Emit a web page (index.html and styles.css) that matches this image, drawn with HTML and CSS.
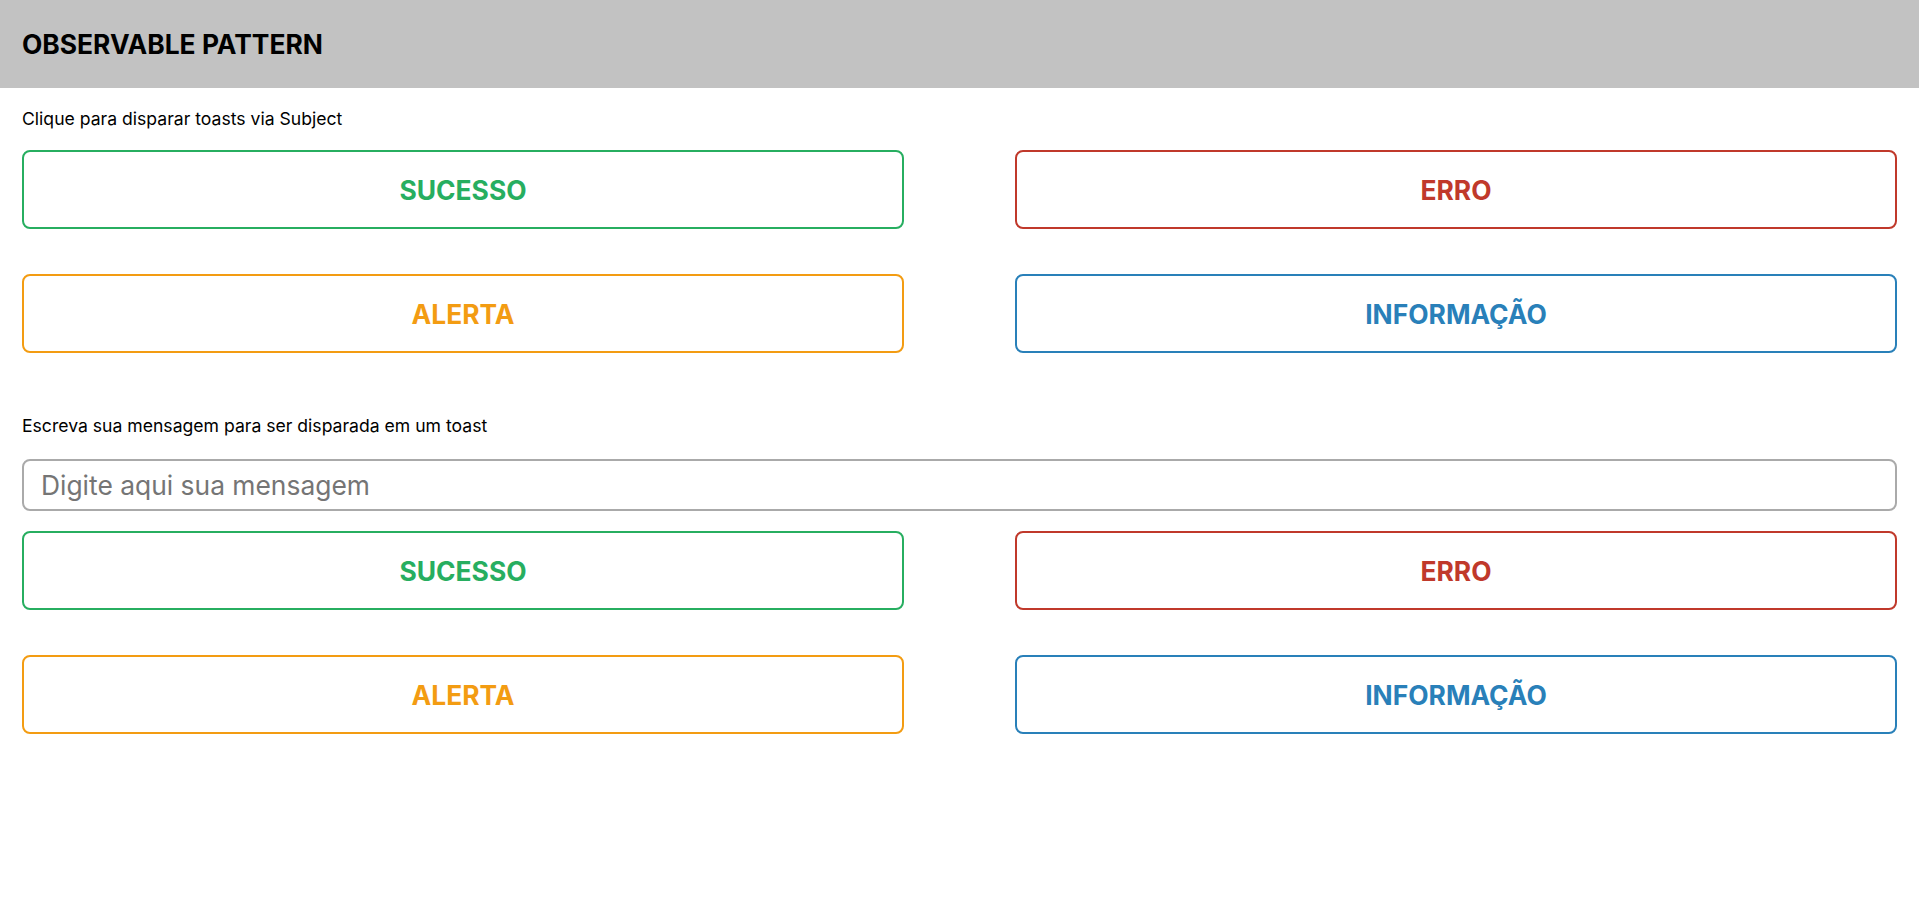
FILE: index.html
```html
<!DOCTYPE html>
<html lang="pt-BR">
<head>
<meta charset="utf-8">
<title>Observable Pattern</title>
<link rel="stylesheet" href="styles.css">
</head>
<body>
<header class="topbar">
  <h1 class="title">OBSERVABLE PATTERN</h1>
</header>
<main class="content">
  <section class="block">
    <p class="label">Clique para disparar toasts via Subject</p>
    <div class="btn-grid">
      <button class="btn btn-success">SUCESSO</button>
      <button class="btn btn-error">ERRO</button>
      <button class="btn btn-warning">ALERTA</button>
      <button class="btn btn-info">INFORMAÇÃO</button>
    </div>
  </section>
  <section class="block block-second">
    <p class="label">Escreva sua mensagem para ser disparada em um toast</p>
    <input class="msg-input" type="text" placeholder="Digite aqui sua mensagem">
    <div class="btn-grid btn-grid-tight">
      <button class="btn btn-success">SUCESSO</button>
      <button class="btn btn-error">ERRO</button>
      <button class="btn btn-warning">ALERTA</button>
      <button class="btn btn-info">INFORMAÇÃO</button>
    </div>
  </section>
</main>
</body>
</html>
```
FILE: styles.css
```css
* { box-sizing: border-box; }
body {
  margin: 0;
  font-family: Inter, "Noto Sans", sans-serif;
  background: #ffffff;
  color: #000;
}
.topbar {
  height: 88px;
  background: #c2c2c2;
  display: flex;
  align-items: center;
  padding: 0 22px;
}
.title {
  margin: 0;
  font-size: 26.4px;
  font-weight: 700;
  color: #000;
}
.content {
  padding: 0 22px;
}
.label {
  margin: 0;
  padding-top: 20px;
  font-size: 17.6px;
  line-height: 21px;
}
.block-second { padding-top: 42px; }
.btn-grid {
  display: grid;
  grid-template-columns: 882px 882px;
  justify-content: space-between;
  row-gap: 45px;
  margin-top: 21px;
}
.btn-grid-tight { margin-top: 20px; }
.btn {
  height: 79px;
  background: #fff;
  border: 2px solid;
  border-radius: 8px;
  font-family: Inter, "Noto Sans", sans-serif;
  font-size: 26.4px;
  font-weight: 700;
  cursor: pointer;
}
.btn-success { color: #27ae60; border-color: #27ae60; }
.btn-error { color: #c0392b; border-color: #c0392b; }
.btn-warning { color: #f39c12; border-color: #f39c12; }
.btn-info { color: #2980b9; border-color: #2980b9; }
.msg-input {
  display: block;
  width: 100%;
  height: 52px;
  margin-top: 23px;
  padding: 0 17px;
  border: 2px solid #aaaaaa;
  border-radius: 8px;
  font-family: Inter, "Noto Sans", sans-serif;
  font-size: 26.4px;
  color: #333;
  outline: none;
}
.msg-input::placeholder { color: #757575; }
```
